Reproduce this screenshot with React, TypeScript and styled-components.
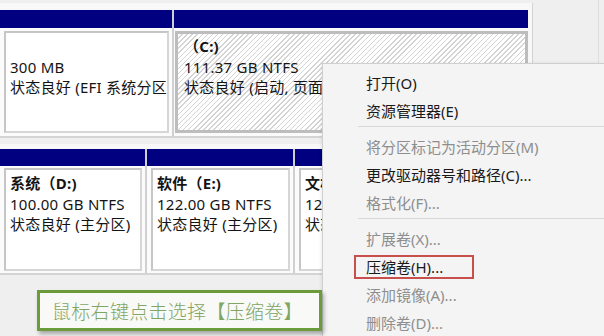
import React from 'react';
import styled, { createGlobalStyle, css } from 'styled-components';

const Global = createGlobalStyle`
  html, body { margin: 0; padding: 0; background: #efefef; overflow: hidden; }
  body { font-family: "Noto Sans", "Noto Sans CJK SC", sans-serif; }
`;

const Page = styled.div`
  position: relative;
  width: 604px;
  height: 336px;
  overflow: hidden;
  background: #efefef;
  display: flex;
`;

const Main = styled.div`
  width: 598px;
  border-right: 1px solid #dedede;
  display: flex;
  flex-direction: column;
  padding-top: 3px;
  gap: 6px;
`;

const DiskRow = styled.div<{ $h: number; $pt: number }>`
  width: 532px;
  height: ${p => p.$h}px;
  padding-top: ${p => p.$pt}px;
  background: #f8f8f8;
  border-right: 1px solid #d2d2d2;
  border-bottom: 2px solid #d4d4d4;
  display: flex;
  align-items: stretch;
`;

const Partition = styled.div<{ $w?: number; $sep?: boolean }>`
  ${p => (p.$w ? css`width: ${p.$w}px;` : css`flex: 1;`)}
  display: flex;
  flex-direction: column;
  background: #fbfbfb;
  ${p => p.$sep && css`border-left: 2px solid #d0d0d4;`}
`;

const Bar = styled.div<{ $h: number }>`
  height: ${p => p.$h}px;
  flex: none;
  background: #000080;
`;

const Box = styled.div<{ $gap: number; $selected?: boolean }>`
  flex: 1;
  margin: ${p => p.$gap}px 3px ${p => p.$gap}px 4px;
  border: 2px solid #c6c6c6;
  border-right-color: #d6d6d6;
  border-bottom-color: #d6d6d6;
  background: #fff;
  padding: 3px 4px;
  overflow: hidden;
  white-space: nowrap;
  font-size: 15px;
  letter-spacing: 0.25px;
  line-height: 20.5px;
  color: #141414;
  ${p =>
    p.$selected &&
    css`
      margin: ${p.$gap}px 0 ${p.$gap}px 1px;
      border: 3px solid #bdbdbd;
      padding: 2px 6px;
      background: repeating-linear-gradient(
        135deg,
        #ffffff 0px,
        #ffffff 2.6px,
        #d4d4d4 2.6px,
        #d4d4d4 3.6px
      );
    `}
`;

const Line = styled.div``;

const Label = styled.div`
  font-weight: 700;
  height: 20.5px;
`;

const ContextMenu = styled.div`
  position: absolute;
  left: 322px;
  top: 63px;
  right: 0;
  bottom: 0;
  background: #f4f4f4;
  border-left: 1px solid #cfcfcf;
  border-top: 1px solid #cfcfcf;
  padding-top: 5px;
  font-size: 15px;
  box-shadow: -1px 0 3px rgba(0, 0, 0, 0.08);
`;

const Item = styled.div<{ $disabled?: boolean; $mark?: boolean }>`
  position: relative;
  height: 28px;
  line-height: 28px;
  padding-left: 43px;
  white-space: nowrap;
  color: ${p => (p.$disabled ? '#8e8e8e' : '#1a1a1a')};
  ${p =>
    p.$mark &&
    css`
      &::after {
        content: '';
        position: absolute;
        left: 31px;
        top: 2px;
        width: 120px;
        height: 24px;
        box-sizing: border-box;
        border: 2px solid #c8504c;
      }
    `}
`;

const Sep = styled.div`
  margin: 1px 0 6px 35px;
  border-top: 1px solid #d9d9d9;
`;

const Callout = styled.div`
  position: absolute;
  left: 37px;
  top: 290px;
  width: 285px;
  height: 41px;
  box-sizing: border-box;
  border: 3px solid #6b9b3b;
  background: #f9f9f7;
  box-shadow: 2px 3px 4px rgba(0, 0, 0, 0.3);
  padding-left: 12px;
  font-family: "Noto Sans CJK SC", serif;
  font-weight: 300;
  font-size: 19px;
  letter-spacing: 0.3px;
  line-height: 35px;
  color: #7fa663;
  white-space: nowrap;
`;

type P = { label?: string; size: string; status: string };

const row1: (P & { w?: number; selected?: boolean })[] = [
  { size: '300 MB', status: '状态良好 (EFI 系统分区)', w: 172 },
  { label: '（C:)', size: '111.37 GB NTFS', status: '状态良好 (启动, 页面文件, 故障转储, 基本数据分区)', w: 354, selected: true },
];

const row2: (P & { w?: number })[] = [
  { label: '系统（D:)', size: '100.00 GB NTFS', status: '状态良好 (主分区)', w: 145 },
  { label: '软件（E:)', size: '122.00 GB NTFS', status: '状态良好 (主分区)', w: 146 },
  { label: '文档（F:)', size: '121.37 GB NTFS', status: '状态良好 (主分区)' },
];

const menu: ({ t: string; d?: boolean; m?: boolean } | 'sep')[] = [
  { t: '打开(O)' },
  { t: '资源管理器(E)' },
  'sep',
  { t: '将分区标记为活动分区(M)', d: true },
  { t: '更改驱动器号和路径(C)...' },
  { t: '格式化(F)...', d: true },
  'sep',
  { t: '扩展卷(X)...', d: true },
  { t: '压缩卷(H)...', m: true },
  { t: '添加镜像(A)...', d: true },
  { t: '删除卷(D)...', d: true },
];

export default function App() {
  return (
    <>
      <Global />
      <Page>
        <Main>
          <DiskRow $h={126} $pt={7}>
            {row1.map((p, i) => (
              <Partition key={i} $w={p.w} $sep={i > 0}>
                <Bar $h={18} />
                <Box $gap={3} $selected={p.selected}>
                  <Label>{p.label ?? ''}</Label>
                  <Line>{p.size}</Line>
                  <Line>{p.status}</Line>
                </Box>
              </Partition>
            ))}
          </DiskRow>
          <DiskRow $h={124} $pt={5}>
            {row2.map((p, i) => (
              <Partition key={i} $w={p.w} $sep={i > 0}>
                <Bar $h={17} />
                <Box $gap={2}>
                  <Label>{p.label}</Label>
                  <Line>{p.size}</Line>
                  <Line>{p.status}</Line>
                </Box>
              </Partition>
            ))}
          </DiskRow>
        </Main>
        <ContextMenu>
          {menu.map((m, i) =>
            m === 'sep' ? (
              <Sep key={i} />
            ) : (
              <Item key={i} $disabled={m.d} $mark={m.m}>
                {m.t}
              </Item>
            )
          )}
        </ContextMenu>
        <Callout>鼠标右键点击选择【压缩卷】</Callout>
      </Page>
    </>
  );
}
